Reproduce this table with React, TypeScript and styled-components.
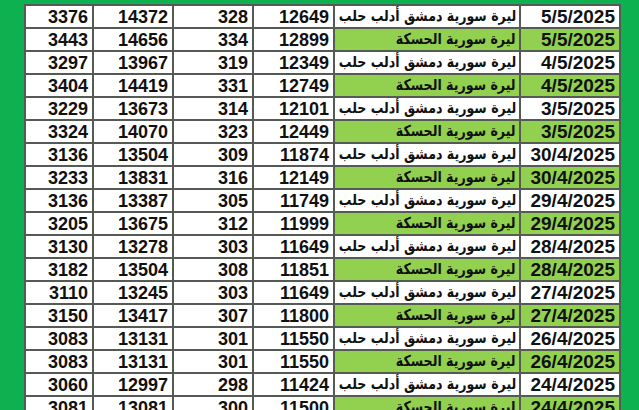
import React from "react";
import styled, { createGlobalStyle } from "styled-components";

type Row = {
  date: string;
  city: "damascus" | "hasakah";
  price: string;
  unit: string;
  total: string;
  rest: string;
};

const labels = {
  damascus: "ليرة سورية دمشق أدلب حلب",
  hasakah: "ليرة سورية الحسكة",
};

const rows: Row[] = [
  { date: "5/5/2025", city: "damascus", price: "12649", unit: "328", total: "14372", rest: "3376" },
  { date: "5/5/2025", city: "hasakah", price: "12899", unit: "334", total: "14656", rest: "3443" },
  { date: "4/5/2025", city: "damascus", price: "12349", unit: "319", total: "13967", rest: "3297" },
  { date: "4/5/2025", city: "hasakah", price: "12749", unit: "331", total: "14419", rest: "3404" },
  { date: "3/5/2025", city: "damascus", price: "12101", unit: "314", total: "13673", rest: "3229" },
  { date: "3/5/2025", city: "hasakah", price: "12449", unit: "323", total: "14070", rest: "3324" },
  { date: "30/4/2025", city: "damascus", price: "11874", unit: "309", total: "13504", rest: "3136" },
  { date: "30/4/2025", city: "hasakah", price: "12149", unit: "316", total: "13831", rest: "3233" },
  { date: "29/4/2025", city: "damascus", price: "11749", unit: "305", total: "13387", rest: "3136" },
  { date: "29/4/2025", city: "hasakah", price: "11999", unit: "312", total: "13675", rest: "3205" },
  { date: "28/4/2025", city: "damascus", price: "11649", unit: "303", total: "13278", rest: "3130" },
  { date: "28/4/2025", city: "hasakah", price: "11851", unit: "308", total: "13504", rest: "3182" },
  { date: "27/4/2025", city: "damascus", price: "11649", unit: "303", total: "13245", rest: "3110" },
  { date: "27/4/2025", city: "hasakah", price: "11800", unit: "307", total: "13417", rest: "3150" },
  { date: "26/4/2025", city: "damascus", price: "11550", unit: "301", total: "13131", rest: "3083" },
  { date: "26/4/2025", city: "hasakah", price: "11550", unit: "301", total: "13131", rest: "3083" },
  { date: "24/4/2025", city: "damascus", price: "11424", unit: "298", total: "12997", rest: "3060" },
  { date: "24/4/2025", city: "hasakah", price: "11500", unit: "300", total: "13081", rest: "3081" },
];

const GlobalStyle = createGlobalStyle`
  html, body {
    margin: 0;
    padding: 0;
    width: 639px;
    height: 410px;
    overflow: hidden;
    background: #0db14f;
  }
`;

const Page = styled.div`
  width: 639px;
  height: 410px;
  overflow: hidden;
  background: #0db14f;
  padding: 4px 0 0 24px;
  box-sizing: border-box;
`;

const Table = styled.div`
  width: 597px;
  display: grid;
  grid-template-columns: 66px 78px 78px 79px 184px 98px;
  grid-auto-rows: 21px;
  gap: 2px;
  padding: 2px;
  box-sizing: border-box;
  background: #555a55;
  font-family: "Liberation Sans", "DejaVu Sans", Arial, sans-serif;
  font-weight: bold;
  color: #111;
`;

const Cell = styled.div<{ $green?: boolean; $size?: number }>`
  background: ${(p) => (p.$green ? "#92d050" : "#ffffff")};
  display: flex;
  align-items: center;
  justify-content: flex-end;
  padding-right: 4px;
  font-size: ${(p) => p.$size ?? 18}px;
  line-height: 1;
  white-space: nowrap;
  overflow: hidden;
`;

const LabelCell = styled(Cell)`
  direction: rtl;
  justify-content: flex-start;
  padding-right: 3px;
`;

const LabelText = styled.span`
  display: inline-block;
  flex: none;
  font-family: "DejaVu Sans", sans-serif;
  font-size: 15px;
  transform: scaleX(0.84);
  transform-origin: right center;
`;

export default function App() {
  return (
    <>
      <GlobalStyle />
      <Page>
        <Table>
          {rows.map((r, i) => {
            const green = r.city === "hasakah";
            return (
              <React.Fragment key={i}>
                <Cell>{r.rest}</Cell>
                <Cell>{r.total}</Cell>
                <Cell>{r.unit}</Cell>
                <Cell>{r.price}</Cell>
                <LabelCell $green={green}>
                  <LabelText>{labels[r.city]}</LabelText>
                </LabelCell>
                <Cell $green={green} $size={19}>{r.date}</Cell>
              </React.Fragment>
            );
          })}
        </Table>
      </Page>
    </>
  );
}
